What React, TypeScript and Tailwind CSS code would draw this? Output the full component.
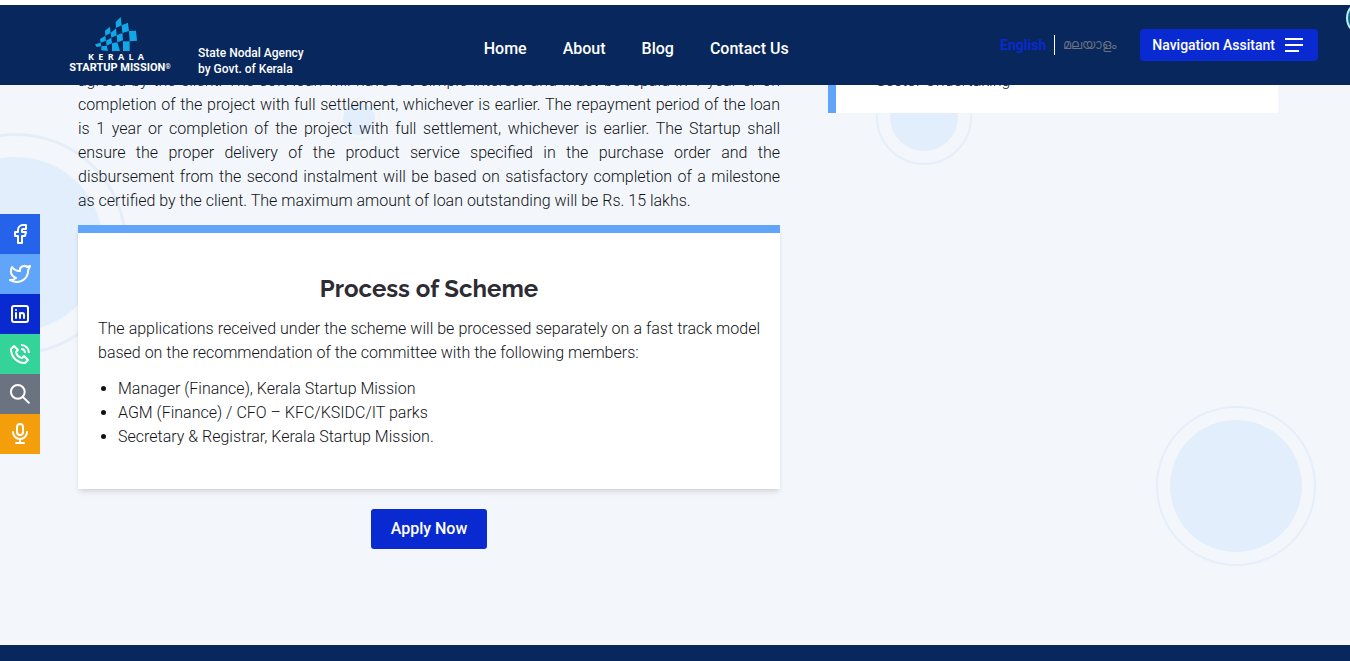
import React from "react";
import { TbBrandFacebook, TbBrandTwitter, TbMicrophone } from "react-icons/tb";
import { BiPhoneCall } from "react-icons/bi";

const navItems = ["Home", "About", "Blog", "Contact Us"];

function LinkedinIcon({ className }: { className?: string }) {
  return (
    <svg
      viewBox="0 0 24 24"
      className={className}
      fill="none"
      stroke="currentColor"
      strokeWidth="2"
      strokeLinecap="round"
      strokeLinejoin="round"
      aria-hidden="true"
    >
      <rect x="4" y="4" width="16" height="16" rx="2" />
      <path d="M8 11v5M8 8v.01M12 16v-5M16 16v-3a2 2 0 0 0-4 0" />
    </svg>
  );
}

function SearchIcon({ className }: { className?: string }) {
  return (
    <svg viewBox="0 0 24 24" className={className} fill="none" stroke="currentColor" strokeWidth="2" aria-hidden="true">
      <circle cx="9.8" cy="9.8" r="6.9" />
      <path d="M14.7 14.7 21.4 21.4" />
    </svg>
  );
}

const quickLinks = [
  { label: "Facebook", color: "bg-[#2563eb]", Icon: TbBrandFacebook },
  { label: "Twitter", color: "bg-[#60a5fa]", Icon: TbBrandTwitter },
  { label: "LinkedIn", color: "bg-[#0a2ad1]", Icon: LinkedinIcon },
  { label: "Call", color: "bg-[#34d399]", Icon: BiPhoneCall },
  { label: "Search", color: "bg-[#6b7280]", Icon: SearchIcon },
  { label: "Voice", color: "bg-[#f59e0b]", Icon: TbMicrophone },
];

const members = [
  "Manager (Finance), Kerala Startup Mission",
  "AGM (Finance) / CFO – KFC/KSIDC/IT parks",
  "Secretary & Registrar, Kerala Startup Mission.",
];

function LogoMark() {
  return (
    <svg viewBox="285 51 126 102" className="h-[34px] w-[42px]" fill="#12a8e8" aria-hidden="true">
      <path d="M347 66 362 51 365 76 348 84Z" />
      <path d="M365 76 384 68 387 93 367 99Z" />
      <path d="M387 93 408 92 411 122 389 124Z" />
      <path d="M315 92 330 80 332 99 316 107Z" />
      <path d="M332 99 348 85 350 106 334 113Z" />
      <path d="M350 106 367 99 369 121 352 127Z" />
      <path d="M369 124 389 124 389 153 369 153Z" />
      <path d="M300 117 316 107 318 122 302 128Z" />
      <path d="M318 122 334 113 336 130 320 137Z" />
      <path d="M336 130 352 127 360 153 336 153Z" />
      <path d="M285 133 302 128 304 139 290 141Z" />
      <path d="M304 139 320 137 324 153 304 151Z" />
    </svg>
  );
}

function Header() {
  return (
    <header className="relative z-10 flex h-20 shrink-0 items-center bg-[#08275c] pr-8 text-white">
      <a href="#home" className="ml-[70px] flex w-[100px] flex-col items-center whitespace-nowrap font-['Open_Sans',sans-serif]">
        <span className="mr-2">
          <LogoMark />
        </span>
        <span className="mr-2 flex w-14 justify-between text-[9px] leading-[11px] font-bold">
          {["K", "E", "R", "A", "L", "A"].map((letter, i) => (
            <span key={i}>{letter}</span>
          ))}
        </span>
        <span className="flex font-[Roboto,sans-serif] text-[11px] leading-3 font-bold">
          STARTUP MISSION<span className="text-[7px] leading-[10px] font-normal">®</span>
        </span>
      </a>
      <p className="mt-8 ml-7 text-xs leading-4 font-medium whitespace-nowrap">
        State Nodal Agency
        <br />
        by Govt. of Kerala
      </p>
      <nav className="mt-2 ml-[180px] flex gap-9 font-medium whitespace-nowrap">
        {navItems.map((item) => (
          <a key={item} href="#nav">
            {item}
          </a>
        ))}
      </nav>
      <div className="ml-auto flex items-center text-sm whitespace-nowrap">
        <a href="#en" className="pr-2 font-bold text-[#0a2ad1]">
          English
        </a>
        <a href="#ml" className="border-l border-white pl-2 text-[13px] leading-5 font-medium text-[#6b7280]">
          മലയാളം
        </a>
        <button type="button" className="ml-6 flex h-8 items-center gap-[10px] rounded bg-[#0a2ad1] pr-[15px] pl-3 font-medium">
          Navigation Assitant
          <svg viewBox="0 0 18 16" className="h-4 w-[18px]" stroke="currentColor" strokeWidth="2" aria-hidden="true">
            <path d="M0 2H18M0 8H18M0 14H14" />
          </svg>
        </button>
      </div>
    </header>
  );
}

function Bubbles() {
  return (
    <div aria-hidden="true" className="pointer-events-none">
      <div className="absolute top-12 -left-[95px] size-[222px] rounded-full border-3 border-[#e4edf9] p-[21px]">
        <div className="size-full rounded-full bg-[#e2eefb]" />
      </div>
      <div className="absolute top-[13px] left-[338px] size-[42px] rounded-full border border-[#edf3fb] p-1">
        <div className="size-full rounded-full bg-[#e2eefb]" />
      </div>
      <div className="absolute -top-4 left-[876px] size-24 rounded-full border-2 border-[#e6eef9] p-3">
        <div className="size-full rounded-full bg-[#e2eefb]" />
      </div>
      <div className="absolute right-[34px] bottom-[79px] size-40 rounded-full border-2 border-[#e6eef9] p-3">
        <div className="size-full rounded-full bg-[#e2eefb]" />
      </div>
    </div>
  );
}

export default function App() {
  return (
    <div className="flex min-h-screen flex-col overflow-hidden bg-[#08275c] font-[Roboto,sans-serif]">
      <div className="h-[5px] shrink-0 bg-white" />
      <Header />
      <div className="absolute top-0 right-0 z-20 h-9 w-1 overflow-hidden">
        <div className="size-9 rounded-full border-2 border-[#b5eef5] bg-[#0d6a80]" />
      </div>

      <main className="relative overflow-hidden bg-[#f3f7fc] pb-24">
        <Bubbles />
        <div className="relative -mt-4 grid grid-cols-[702fr_450fr] items-start gap-12 pr-[72px] pl-[78px] font-light text-[#111318]">
          <div>
            <p className="text-justify">
              agreed by the client. The soft loan will have 6% simple interest and must be repaid in 1 year or on
              completion of the project with full settlement, whichever is earlier. The repayment period of the loan is 1
              year or completion of the project with full settlement, whichever is earlier. The Startup shall ensure the
              proper delivery of the product service specified in the purchase order and the disbursement from the second
              instalment will be based on satisfactory completion of a milestone as certified by the client. The maximum
              amount of loan outstanding will be Rs. 15 lakhs.
            </p>
            <section className="mt-3 border-t-8 border-[#60a5fa] bg-white px-5 py-10 shadow-md">
              <h2 className="mb-3 text-center font-[Raleway,Inter,sans-serif] text-2xl font-bold text-[#2d2b33]">
                Process of Scheme
              </h2>
              <p className="text-justify">
                The applications received under the scheme will be processed separately on a fast track model based on the
                recommendation of the committee with the following members:
              </p>
              <ul className="mt-3 list-disc pl-5">
                {members.map((member) => (
                  <li key={member}>{member}</li>
                ))}
              </ul>
            </section>
            <div className="mt-5 flex justify-center">
              <a href="#apply" className="flex h-10 items-center rounded-[3px] bg-[#0a2ad1] px-5 font-medium text-white">
                Apply Now
              </a>
            </div>
          </div>
          <aside className="border-l-8 border-[#60a5fa] bg-white pb-5 pl-10">Sector Undertaking</aside>
        </div>
      </main>

      <aside className="fixed top-[214px] left-0 z-20 flex flex-col text-white">
        {quickLinks.map(({ label, color, Icon }) => (
          <a key={label} href="#link" aria-label={label} className={`flex size-10 items-center justify-center ${color}`}>
            <Icon className="size-6" />
          </a>
        ))}
      </aside>
      <footer className="min-h-4 bg-[#08275c]" />
    </div>
  );
}
